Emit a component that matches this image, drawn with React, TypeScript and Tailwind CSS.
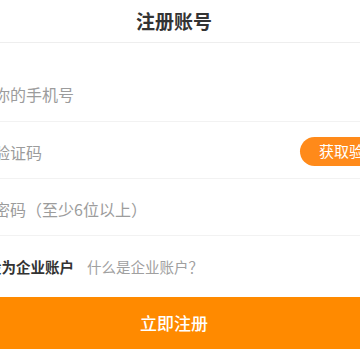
import React from "react";

const font = { fontFamily: '"Noto Sans CJK SC", "Noto Sans", sans-serif' };

export default function App() {
  return (
    <div className="w-[360px] h-[360px] overflow-hidden bg-white" style={font}>
      {/* page is wider than the viewport and shifted left */}
      <div className="w-[484px] -ml-[68px] flex flex-col">
        {/* Header */}
        <div className="h-[43px] flex items-center justify-center border-b border-[#eeeeee]">
          <h1 className="text-[19px] font-semibold text-[#333333]">注册账号</h1>
        </div>

        {/* Form rows */}
        <div className="mt-[22px] flex flex-col">
          <div className="h-[57px] flex items-center px-[14px] pt-[2px] border-b border-[#f2f2f2]">
            <input
              className="flex-1 text-[16px] text-[#333] placeholder-[#9c9c9c] outline-none bg-transparent"
              placeholder="请输入你的手机号"
            />
          </div>
          <div className="h-[57px] flex items-center pl-[14px] pr-[12px] pt-[3px] border-b border-[#f2f2f2]">
            <input
              className="flex-1 min-w-0 text-[16px] text-[#333] placeholder-[#9c9c9c] outline-none bg-transparent"
              placeholder="请输入验证码"
            />
            <button className="h-[29px] w-[104px] shrink-0 rounded-full bg-[#ff8a1a] text-white text-[15px] flex items-center justify-start pl-[19px] whitespace-nowrap">
              获取验证码
            </button>
          </div>
          <div className="h-[57px] flex items-center px-[14px] pt-[4px] border-b border-[#f2f2f2]">
            <input
              type="password"
              className="flex-1 text-[16px] text-[#333] placeholder-[#9c9c9c] outline-none bg-transparent"
              placeholder="请输入密码（至少6位以上）"
            />
          </div>
        </div>

        {/* Enterprise option */}
        <div className="h-[61px] flex items-center px-[14px] pt-[1px]">
          <span className="w-[16px] h-[16px] rounded-full border border-[#cccccc] mr-[25px]" />
          <span className="text-[14.5px] font-bold text-[#333333]">设为企业账户</span>
          <span className="ml-[13px] text-[14.5px] text-[#a0a0a0]">什么是企业账户？</span>
        </div>

        {/* Submit */}
        <button className="h-[52px] w-full bg-[#ff8a00] text-white text-[17px] font-medium flex items-center justify-center">
          立即注册
        </button>
      </div>
    </div>
  );
}
